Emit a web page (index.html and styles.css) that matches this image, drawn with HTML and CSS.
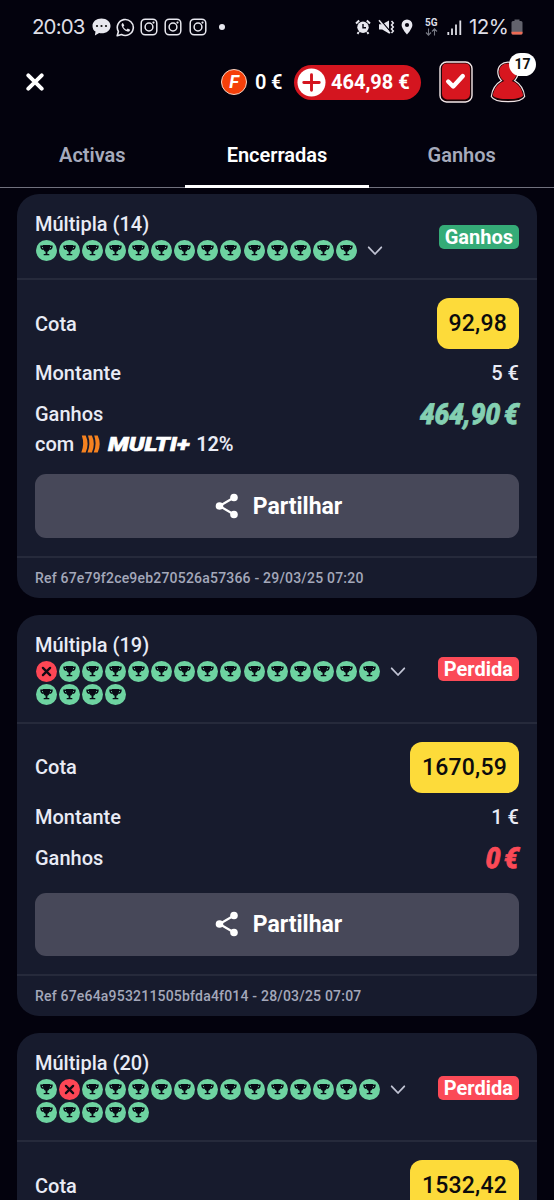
FILE: index.html
```
<!DOCTYPE html>
<html lang="pt">
<head>
<meta charset="utf-8">
<title>As minhas apostas</title>
<link rel="stylesheet" href="styles.css">
</head>
<body>
<svg class="sprite" aria-hidden="true">
  <symbol id="win" viewBox="0 0 21 21"><circle cx="10.5" cy="10.5" r="10.5" fill="#6ed3a1"/><path d="M6.900 5.100h7.200v1.300c0 3-1.200 4.800-2.700 5.300v2.200h1.900v1.400H7.700v-1.400h1.900v-2.200C8.100 11.200 6.900 9.400 6.900 6.400z" fill="#090b16"/><path d="M7 6.200H5c0 1.900.8 3 2.700 3.200M14 6.200h2c0 1.900-.8 3-2.700 3.200" fill="none" stroke="#090b16" stroke-width="1.400"/></symbol>
  <symbol id="loss" viewBox="0 0 21 21"><circle cx="10.500" cy="10.500" r="10.500" fill="#fd4655"/><path d="M6.900 6.900l7.200 7.200M14.100 6.900l-7.200 7.200" stroke="#120a14" stroke-width="2.300" stroke-linecap="round"/></symbol>
  <symbol id="chev" viewBox="0 0 16 12"><path d="M1.700 2.300L8 9l6.300-6.700" fill="none" stroke="#c0c3d3" stroke-width="1.800" stroke-linecap="round" stroke-linejoin="round"/></symbol>
  <symbol id="share" viewBox="0 0 24 26"><path d="M19 4.500L4.500 13 19 21.500" fill="none" stroke="#fff" stroke-width="2.200"/><g fill="#fff"><circle cx="19" cy="4.500" r="3.800"/><circle cx="4.500" cy="13" r="3.800"/><circle cx="19" cy="21.500" r="3.800"/></g></symbol>
  <symbol id="insta" viewBox="0 0 18 18"><rect x="1.200" y="1.200" width="15.600" height="15.600" rx="4" fill="none" stroke="#e8e8ef" stroke-width="1.500"/><circle cx="9" cy="9" r="3.900" fill="none" stroke="#e8e8ef" stroke-width="1.500"/><circle cx="13.500" cy="4.600" r="1.100" fill="#e8e8ef"/></symbol>
</svg>

<div class="status">
  <span class="clock">20:03</span>
  <svg class="s-chat" viewBox="0 0 19 18"><path d="M9.500.5C4.300.5.500 3.700.500 7.900c0 2.600 1.200 4.500 3 5.700L2.900 17.500l4.200-2.400c.8.200 1.600.2 2.400.2 5.200 0 9-3.300 9-7.400S14.700.5 9.500.5z" fill="#e8e8ef"/><g fill="#111"><circle cx="5" cy="8" r="1.100"/><circle cx="9.500" cy="8" r="1.100"/><circle cx="14" cy="8" r="1.100"/></g></svg>
  <svg class="s-wa" viewBox="0 0 19 19"><path d="M1.200 17.800l1.200-4.300a8 8 0 1 1 3.100 3z" fill="none" stroke="#e8e8ef" stroke-width="1.600" stroke-linejoin="round"/><path d="M6.900 5c-.9.300-1.600 1.200-1.300 2.600.6 2.800 3 5.300 5.900 6 1.300.2 2.400-.4 2.700-1.800l-2.500-1.300-1.200 1.300c-1.400-.6-2.600-1.700-3.200-3.100l1-1.200z" fill="#e8e8ef"/></svg>
  <svg class="s-in"><use href="#insta"/></svg>
  <svg class="s-in"><use href="#insta"/></svg>
  <svg class="s-in"><use href="#insta"/></svg>
  <span class="more"></span>
  <span class="spring"></span>
  <svg class="s-alarm" viewBox="0 0 16 16"><circle cx="8" cy="8.300" r="5.700" fill="#e8e8ef"/><path d="M1 4.500l3.200-3M15 4.500l-3.200-3M3.800 13l-1.300 1.800M12.200 13l1.300 1.800" stroke="#e8e8ef" stroke-width="2"/><path d="M8 5v3.700h3" fill="none" stroke="#05040f" stroke-width="1.400"/></svg>
  <svg class="s-mute" viewBox="0 0 17 16"><path d="M1 5.200h3.200L11 1.500v13l-6.800-4H1z" fill="#e8e8ef"/><path d="M2.300 1l10 11.500" stroke="#05040f" stroke-width="1.200"/><path d="M1 1.300l11 13" stroke="#e8e8ef" stroke-width="1.500"/><path d="M13.500 2l1.800 2-1.800 2 1.800 2-1.800 2 1.800 2-1.800 2" fill="none" stroke="#e8e8ef" stroke-width="1.500"/></svg>
  <svg class="s-pin" viewBox="0 0 12 16"><path d="M6 .5A5.400 5.400 0 0 0 .600 5.900C.600 9.500 6 15.500 6 15.500s5.400-6 5.400-9.600A5.400 5.400 0 0 0 6 .500z" fill="#e8e8ef"/><circle cx="6" cy="6" r="2.100" fill="#05040f"/></svg>
  <span class="net"><b>5G</b><svg viewBox="0 0 13 8"><path d="M3.500.5v6.500M1 4.500l2.500 2.600L6 4.500M9.500 7.500V1M7 3.500L9.500.900 12 3.500" fill="none" stroke="#777984" stroke-width="1.100"/></svg></span>
  <svg class="s-sig" viewBox="0 0 15 15"><path d="M1.300 12v3M5 8.500V15M9 4.500V15M13.300.500V15" stroke="#dedee6" stroke-width="1.800"/></svg>
  <span class="pct">12%</span>
  <svg class="s-bat" viewBox="0 0 12 16"><path d="M3.500 2V.5h5V2H10a1.500 1.500 0 0 1 1.500 1.500v10.500a1.500 1.500 0 0 1-1.500 1.500H2A1.500 1.500 0 0 1 .500 14V3.500A1.500 1.500 0 0 1 2 2z" fill="#62626c"/><path d="M.5 12.700h11V14a1.500 1.500 0 0 1-1.500 1.500H2A1.500 1.500 0 0 1 .500 14z" fill="#ef6b55"/></svg>
</div>

<header class="top">
  <svg class="close" viewBox="0 0 18 18"><path d="M2.300 2.300l13.400 13.400M15.700 2.300L2.300 15.700" stroke="#fff" stroke-width="3.900" stroke-linecap="round"/></svg>
  <span class="spring"></span>
  <span class="coin">F</span>
  <span class="free">0 €</span>
  <span class="wallet"><svg viewBox="0 0 30 30"><circle cx="15" cy="15" r="14.500" fill="#fff"/><path d="M15 7v16M7 15h16" stroke="#d4151f" stroke-width="3" stroke-linecap="round"/></svg><span>464,98 €</span></span>
  <svg class="slip" viewBox="0 0 34 42"><rect x="1" y="1" width="32" height="40" rx="6.500" fill="#1a0508" stroke="#f5e9ea" stroke-width="1.400"/><path d="M8 2.500h18q5 0 5 5v25q0 5-5 6H8q-5-1-5-6v-25q0-5 5-5z" fill="#d7161f"/><path d="M9.200 20.500l5 5 9.600-10.500" fill="none" stroke="#fff" stroke-width="4.400" stroke-linecap="round" stroke-linejoin="round"/></svg>
  <div class="user"><svg viewBox="0 0 36 42"><path d="M18 1.200c-6 0-10.200 4-10.200 9.600 0 3.700 1.400 6.600 3.700 8.800C6.500 22.500 2.300 28 1.300 35.500c2 3.700 8.700 5.200 16.700 5.200s14.700-1.500 16.700-5.200C33.700 28 29.500 22.500 24.500 19.600c2.300-2.200 3.700-5.100 3.700-8.800 0-5.600-4.200-9.600-10.200-9.600z" fill="#1a0508" stroke="#f0e4e6" stroke-width="1.200"/><path d="M18 2.500c-5.200 0-8.800 3.300-8.800 8.200 0 4 1.700 7 5 9.300C8 22.500 3.900 27.500 2.900 34.500c2 2.600 8 3.600 15.100 3.600s13.100-1 15.100-3.600C32.100 27.500 28 22.500 21.800 20c3.300-2.300 5-5.300 5-9.300 0-4.900-3.600-8.200-8.800-8.200z" fill="#d7161f"/></svg><span class="count">17</span></div>
</header>

<nav class="tabs">
  <a>Activas</a><a class="on">Encerradas</a><a>Ganhos</a>
</nav>

<main class="list">
  <article class="card">
    <div class="head">
      <div><h2>Múltipla (14)</h2>
        <div class="pickrow"><div class="picks n14"><svg><use href="#win"/></svg><svg><use href="#win"/></svg><svg><use href="#win"/></svg><svg><use href="#win"/></svg><svg><use href="#win"/></svg><svg><use href="#win"/></svg><svg><use href="#win"/></svg><svg><use href="#win"/></svg><svg><use href="#win"/></svg><svg><use href="#win"/></svg><svg><use href="#win"/></svg><svg><use href="#win"/></svg><svg><use href="#win"/></svg><svg><use href="#win"/></svg></div><svg class="chev"><use href="#chev"/></svg></div>
      </div>
      <span class="tag won">Ganhos</span>
    </div>
    <div class="body">
      <div class="row odds"><span>Cota</span><span class="odd">92,98</span></div>
      <div class="row stake"><span>Montante</span><span>5 €</span></div>
      <div class="row gain"><span>Ganhos</span><span class="amount">464,90 €</span></div>
      <div class="row bonus"><span>com</span><svg class="flames" viewBox="0 0 19 18"><g fill="#f58220"><path d="M.8.500h3.900Q8.500 9 4.700 17.500H.300Q3.800 9 .800.500z"/><path d="M7 .5h3.900Q14.700 9 10.900 17.500H6.500Q10 9 7 .500z"/><path d="M13.200.500h3.500Q20.700 9 16.700 17.500h-4Q16.200 9 13.200.500z"/></g></svg><b class="multi"><i>MULTI+</i></b><span class="boost">12%</span></div>
      <button class="share"><svg><use href="#share"/></svg><span>Partilhar</span></button>
    </div>
    <div class="ref">Ref 67e79f2ce9eb270526a57366 - 29/03/25 07:20</div>
  </article>

  <article class="card">
    <div class="head">
      <div><h2>Múltipla (19)</h2>
        <div class="pickrow"><div class="picks"><svg><use href="#loss"/></svg><svg><use href="#win"/></svg><svg><use href="#win"/></svg><svg><use href="#win"/></svg><svg><use href="#win"/></svg><svg><use href="#win"/></svg><svg><use href="#win"/></svg><svg><use href="#win"/></svg><svg><use href="#win"/></svg><svg><use href="#win"/></svg><svg><use href="#win"/></svg><svg><use href="#win"/></svg><svg><use href="#win"/></svg><svg><use href="#win"/></svg><svg><use href="#win"/></svg><svg><use href="#win"/></svg><svg><use href="#win"/></svg><svg><use href="#win"/></svg><svg><use href="#win"/></svg></div><svg class="chev"><use href="#chev"/></svg></div>
      </div>
      <span class="tag lost">Perdida</span>
    </div>
    <div class="body">
      <div class="row odds"><span>Cota</span><span class="odd">1670,59</span></div>
      <div class="row stake"><span>Montante</span><span>1 €</span></div>
      <div class="row gain"><span>Ganhos</span><span class="amount red">0 €</span></div>
      <button class="share"><svg><use href="#share"/></svg><span>Partilhar</span></button>
    </div>
    <div class="ref">Ref 67e64a953211505bfda4f014 - 28/03/25 07:07</div>
  </article>

  <article class="card">
    <div class="head">
      <div><h2>Múltipla (20)</h2>
        <div class="pickrow"><div class="picks"><svg><use href="#win"/></svg><svg><use href="#loss"/></svg><svg><use href="#win"/></svg><svg><use href="#win"/></svg><svg><use href="#win"/></svg><svg><use href="#win"/></svg><svg><use href="#win"/></svg><svg><use href="#win"/></svg><svg><use href="#win"/></svg><svg><use href="#win"/></svg><svg><use href="#win"/></svg><svg><use href="#win"/></svg><svg><use href="#win"/></svg><svg><use href="#win"/></svg><svg><use href="#win"/></svg><svg><use href="#win"/></svg><svg><use href="#win"/></svg><svg><use href="#win"/></svg><svg><use href="#win"/></svg><svg><use href="#win"/></svg></div><svg class="chev"><use href="#chev"/></svg></div>
      </div>
      <span class="tag lost">Perdida</span>
    </div>
    <div class="body">
      <div class="row odds"><span>Cota</span><span class="odd">1532,42</span></div>
    </div>
  </article>
</main>
</body>
</html>
```
FILE: styles.css
```
* { box-sizing: border-box; }
html, body { margin: 0; height: 1200px; overflow: hidden; }
body {
  background: #03020d;
  color: #e9ebf5;
  font: 500 20px/30px Roboto, "Liberation Sans", sans-serif;
}
svg { display: block; flex: none; }
.sprite { display: none; }
.spring { flex: 1; }

.status { display: flex; align-items: center; height: 54px; padding: 0 31px 0 32px; color: #dedee6; }
.clock, .pct { font: 400 20.5px/30px Inter, Roboto, sans-serif; }
.clock { width: 53px; letter-spacing: -.9px; }
.s-chat { width: 19px; height: 18px; margin: 0 5px 0 7px; }
.s-wa { width: 19px; height: 19px; margin-right: 5px; }
.s-in { width: 18px; height: 18px; margin-right: 6.300px; }
.more { width: 6px; height: 6px; border-radius: 50%; background: #e8e8ef; margin-left: 6px; }
.s-alarm { width: 16px; height: 16px; margin-right: 7px; }
.s-mute { width: 17px; height: 16px; margin-right: 6px; }
.s-pin { width: 12px; height: 16px; margin-right: 12px; }
.net { width: 14px; margin-right: 8px; }
.net b { display: block; font: 700 10px/9px Roboto, sans-serif; }
.net svg { width: 13px; height: 8px; margin-top: 1px; }
.s-sig { width: 15px; height: 15px; margin-right: 7px; }
.pct { letter-spacing: -.6px; width: 41px; white-space: nowrap; }
.s-bat { width: 12px; height: 16px; margin-left: 1px; }

.top { display: flex; align-items: center; height: 56px; padding: 0 28px 0 26px; }
.close { width: 18px; height: 18px; }
.coin {
  width: 26px; height: 26px; border-radius: 50%; border: 1.500px solid #f7d5c4;
  background: #f5400a; color: #fff; text-align: center;
  font: italic 700 18px/23px Roboto, sans-serif;
}
.free { color: #fff; font-weight: 600; margin: 0 13px 0 8px; width: 26px; white-space: nowrap; letter-spacing: -.2px; }
.wallet {
  display: flex; align-items: center; gap: 5px; width: 127px; height: 35px;
  padding-left: 3px; border-radius: 18px; background: #d4151f; color: #fff;
  font-weight: 700; white-space: nowrap;
}
.wallet svg { width: 29px; height: 29px; }
.slip { width: 34px; height: 42px; margin: 0 17px 0 18px; }
.user { position: relative; width: 36px; height: 42px; }
.user svg { width: 36px; height: 42px; }
.count {
  position: absolute; left: 19px; top: -8px; width: 27px; height: 23px;
  border-radius: 12px; background: #fff; color: #111; text-align: center;
  font: 700 14px/23px Roboto, sans-serif;
}

.tabs { display: flex; height: 78px; }
.tabs a {
  flex: 1; padding-top: 30px; text-align: center; color: #a6abbc; font-weight: 600;
  box-shadow: inset 0 -1px #71717d;
}
.tabs .on { color: #fff; box-shadow: inset 0 -3px #fff; }

.list { display: flex; flex-direction: column; gap: 17px; padding: 6px 17px 0; }
.card { flex: none; background: #171b2d; border-radius: 22px; }
.head {
  display: flex; justify-content: space-between; align-items: center;
  padding: 15px 18px 17px; border-bottom: 2px solid #262a3b;
}
h2 { margin: 0; font: inherit; }
.pickrow { display: flex; margin: 1px 0 0 .700px; }
.picks { display: flex; flex-wrap: wrap; gap: 2.100px; width: 347.500px; }
.picks.n14 { width: 324.500px; }
.picks svg { width: 21px; height: 21px; }
.chev { width: 16px; height: 12px; margin: 5px 0 0 7px; }
.tag {
  margin-top: 4px; height: 24px; padding: 0 6px; border-radius: 5px;
  color: #fff; font-weight: 700; line-height: 25px;
}
.won { background: #35ab77; }
.lost { background: #fb4a57; }

.body { display: flex; flex-direction: column; padding: 18px 18px 18px; }
.row { display: flex; justify-content: space-between; align-items: center; }
.odd {
  height: 51px; padding: 0 12px; border-radius: 12px; background: #fddb3a;
  color: #0c0b0d; font-size: 23px; line-height: 51px; letter-spacing: .200px;
}
.stake { margin-top: 9px; }
.gain { margin-top: 11px; }
.amount {
  font: italic 900 29px/30px Roboto, sans-serif; color: #84d0b2;
  word-spacing: -3px; -webkit-text-stroke: .800px currentColor;
  transform: scaleX(.9) skewX(-3deg); transform-origin: right center;
}
.red { color: #fb4a57; }
.bonus { justify-content: flex-start; }
.flames { width: 19px; height: 18px; margin: 0 8px 0 7px; }
.multi { width: 83px; margin-right: 5px; color: #fff; font-weight: 900; white-space: nowrap; }
.multi i { display: inline-block; -webkit-text-stroke: .600px currentColor; transform: scaleX(1.220); transform-origin: left; }
.boost { font-weight: 600; letter-spacing: -.2px; }
.share {
  display: flex; align-items: center; justify-content: center; gap: 14px;
  height: 63.500px; margin-top: 20px; padding: 0 0 0 3px; border: 0; border-radius: 11px;
  background: #474859; color: #fff; font: 700 23px/30px Roboto, sans-serif;
}
.share span { padding-top: 2px; }
.bonus + .share { margin-top: 15px; }
.share svg { width: 24px; height: 26px; }
.ref {
  height: 42px; padding-left: 18px; border-top: 2px solid #262a3b;
  color: #a4a8ba; font-size: 14px; line-height: 40px; letter-spacing: .2px;
}
```
